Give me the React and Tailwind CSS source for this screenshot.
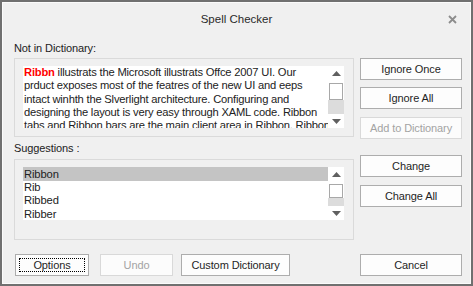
import React from "react";

const font = { fontFamily: '"Liberation Sans", Arial, sans-serif' };

function Btn({ children, disabled, focus, className = "" }) {
  return (
    <div
      className={
        "h-[22px] flex items-center justify-center text-[11px] tracking-[-0.1px] relative " +
        (disabled
          ? "border border-[#d9d9d9] bg-[#fcfcfc] text-[#a3a3a3] "
          : "border border-[#adadad] bg-[#fdfdfd] text-[#1f1f1f] ") +
        className
      }
    >
      {focus && (
        <div className="absolute left-[3px] right-[3px] top-[3px] bottom-[3px] border border-dotted border-black" />
      )}
      <span className="relative">{children}</span>
    </div>
  );
}

function Up() {
  return (
    <svg width="9" height="5" viewBox="0 0 9 5">
      <path d="M0 5 L4.5 0 L9 5 Z" fill="#606060" />
    </svg>
  );
}
function Down() {
  return (
    <svg width="9" height="5" viewBox="0 0 9 5">
      <path d="M0 0 L4.5 5 L9 0 Z" fill="#606060" />
    </svg>
  );
}

function ScrollBar({ thumbH }) {
  return (
    <div className="w-[16px] h-full flex flex-col bg-white">
      <div className="h-[14px] flex items-center justify-center shrink-0">
        <Up />
      </div>
      <div className="flex-1 flex flex-col">
        <div className="mx-[1px] mt-[3px] border border-[#a8a8a8] bg-white" style={{ height: thumbH }} />
        <div className="bg-[#dcdcdc] flex-1" />
      </div>
      <div className="h-[14px] flex items-center justify-center shrink-0">
        <Down />
      </div>
    </div>
  );
}

export default function App() {
  const lines = [
    "prduct exposes most of the featres of the new UI and eeps",
    "intact winhth the Slverlight architecture. Configuring and",
    "designing the layout is very easy through XAML code. Ribbon",
    "tabs and Ribbon bars are the main client area in Ribbon. Ribbon",
  ];
  return (
    <div
      className="w-[473px] h-[286px] bg-[#f0f0f0] border-2 border-[#707070] shadow-[inset_0_0_0_1px_#fbfbfb] flex flex-col text-[#222] overflow-hidden"
      style={font}
    >
      <div className="h-[39px] shrink-0 flex relative">
        <div className="flex-1 text-center text-[11.5px] pt-[9px] text-[#2a2a2a]">Spell Checker</div>
        <div className="absolute right-[14px] top-[13px]">
          <svg width="9" height="9" viewBox="0 0 9 9">
            <path d="M1 1 L8 8 M8 1 L1 8" stroke="#8c8c8c" strokeWidth="1.8" />
          </svg>
        </div>
      </div>
      <div className="flex gap-[6px] pl-[12px]">
        <div className="w-[340px] flex flex-col">
          <div className="h-[17px] text-[11px] tracking-[-0.1px] leading-[14px]">Not in Dictionary:</div>
          <div className="h-[79px] border border-[#dadada] pl-[8px] pr-[9px] pt-[7px] pb-[8px] flex">
            <div className="flex-1 bg-white flex overflow-hidden">
              <div className="flex-1 pl-[1px] text-[11.2px] tracking-[-0.2px] leading-[13.3px] text-[#222] overflow-hidden whitespace-nowrap">
                <div>
                  <span className="font-bold text-[#ff0000]">Ribbn</span> illustrats the Microsoft illustrats Offce 2007 UI. Our
                </div>
                {lines.map((l) => (
                  <div key={l}>{l}</div>
                ))}
              </div>
              <ScrollBar thumbH={17} />
            </div>
          </div>
          <div className="h-[22px] flex items-center text-[11px] tracking-[-0.1px] pt-[1px]">Suggestions :</div>
          <div className="h-[81px] border border-[#dadada] pl-[8px] pr-[9px] pt-[7px] pb-[19px] flex">
            <div className="flex-1 bg-white flex overflow-hidden">
              <div className="flex-1 text-[11.2px] tracking-[-0.1px] leading-[13.3px] text-[#222]">
                <div className="bg-[#c4c4c4] h-[14px] pl-[1px] leading-[14px]">Ribbon</div>
                <div className="pl-[1px]">Rib</div>
                <div className="pl-[1px]">Ribbed</div>
                <div className="pl-[1px]">Ribber</div>
              </div>
              <ScrollBar thumbH={14} />
            </div>
          </div>
        </div>
        <div className="w-[102px] flex flex-col pt-[17px]">
          <Btn>Ignore Once</Btn>
          <Btn className="mt-[7px]">Ignore All</Btn>
          <Btn disabled className="mt-[8px]">Add to Dictionary</Btn>
          <Btn className="mt-[16px]">Change</Btn>
          <Btn className="mt-[8px]">Change All</Btn>
        </div>
      </div>
      <div className="flex pl-[13px] mt-[14px]">
        <Btn focus className="w-[74px]">Options</Btn>
        <Btn disabled className="w-[73px] ml-[11px]">Undo</Btn>
        <Btn className="w-[109px] ml-[8px]">Custom Dictionary</Btn>
        <Btn className="w-[102px] ml-[70px]">Cancel</Btn>
      </div>
    </div>
  );
}
